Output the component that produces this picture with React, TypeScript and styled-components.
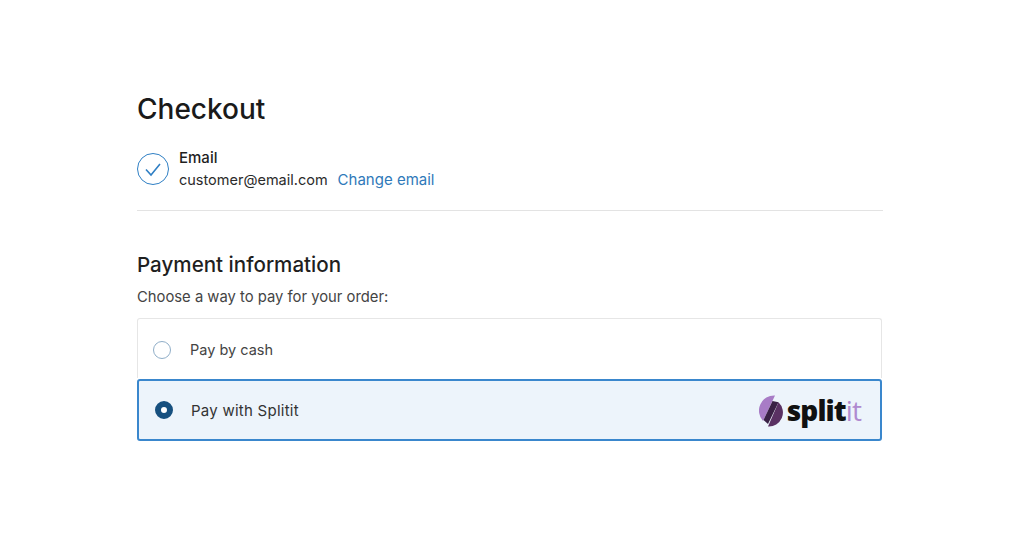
import React from "react";
import styled, { createGlobalStyle } from "styled-components";

const Global = createGlobalStyle`
  html, body { margin: 0; padding: 0; background: #fff; }
  body { font-family: Inter, "Liberation Sans", sans-serif; color: #1f1f1f; }
`;
const Page = styled.main`
  width: 746px;
  height: 538px;
  box-sizing: border-box;
  margin-left: 137px;
  padding-top: 91px;
`;
const Title = styled.h1`
  margin: 0;
  font-size: 28px;
  line-height: 36px;
  font-weight: 500;
  color: #1a1a1a;
`;
const EmailRow = styled.section`
  display: flex;
  align-items: center;
  gap: 10px;
  margin-top: 21px;
  padding-bottom: 20px;
  border-bottom: 1px solid #e3e3e3;
`;
const CheckBadge = styled.span`
  width: 32px;
  height: 32px;
  display: block;
  margin-bottom: 1px;
`;
const EmailText = styled.div`
  display: flex;
  flex-direction: column;
  gap: 2px;
`;
const EmailLabel = styled.div`
  font-size: 15px;
  line-height: 20px;
  font-weight: 500;
`;
const EmailLine = styled.div`
  display: flex;
  gap: 10px;
  font-size: 14.5px;
  line-height: 20px;
  color: #2b2b2b;
`;
const ChangeLink = styled.a`
  color: #2f79b9;
  font-size: 15px;
`;
const Heading = styled.h2`
  margin: 41px 0 0;
  font-size: 20.6px;
  line-height: 26px;
  font-weight: 500;
`;
const Hint = styled.p`
  margin: 9px 0 0;
  font-size: 14.8px;
  line-height: 20px;
  color: #444;
`;
const Methods = styled.div`
  width: 745px;
  margin-top: 11px;
`;
const Option = styled.label<{ $selected?: boolean }>`
  display: flex;
  align-items: center;
  box-sizing: border-box;
  ${(p) =>
    p.$selected
      ? `height: 62px; margin-top: 1px; padding: 0 19px 0 15.500px; gap: 18.500px; background: #edf4fb; border: 2px solid #3a87cd; border-radius: 3px; color: #333; font-size: 15px; letter-spacing: 0.25px;`
      : `height: 60px; padding: 2px 15px 0; gap: 19px; border: 1px solid #e6e6e6; border-bottom: 0; border-radius: 3px 3px 0 0; color: #444; font-size: 14.5px;`}
`;
const Radio = styled.span<{ $selected?: boolean }>`
  width: 18px;
  height: 18px;
  box-sizing: border-box;
  border-radius: 50%;
  flex: none;
  background: #fff;
  border: ${(p) => (p.$selected ? "6px solid #17507f" : "1px solid #90aec8")};
`;
const OptionLabel = styled.span`
  flex: 1;
`;
const Logo = styled.div`
  display: flex;
  align-items: center;
  gap: 2px;
`;
const LogoWord = styled.span`
  font-family: "Open Sans", sans-serif;
  font-size: 28px;
  line-height: 32px;
  font-weight: 800;
  letter-spacing: -0.9px;
  color: #111;
`;
const LogoSuffix = styled.span`
  font-weight: 400;
  color: #b08ad0;
`;

export default function App() {
  return (
    <Page>
      <Global />
      <Title>Checkout</Title>
      <EmailRow>
        <CheckBadge>
          <svg width="32" height="32" viewBox="0 0 32 32" fill="none">
            <circle cx="16" cy="16" r="15.5" stroke="#2f7fc4" />
            <path d="M9 16.5l5 5.5 9-11" stroke="#2f7fc4" strokeWidth="1.6" />
          </svg>
        </CheckBadge>
        <EmailText>
          <EmailLabel>Email</EmailLabel>
          <EmailLine>
            <span>customer@email.com</span>
            <ChangeLink>Change email</ChangeLink>
          </EmailLine>
        </EmailText>
      </EmailRow>
      <Heading>Payment information</Heading>
      <Hint>Choose a way to pay for your order:</Hint>
      <Methods>
        <Option>
          <Radio />
          <OptionLabel>Pay by cash</OptionLabel>
        </Option>
        <Option $selected>
          <Radio $selected />
          <OptionLabel>Pay with Splitit</OptionLabel>
          <Logo>
            <svg width="26" height="33" viewBox="1 0 26 33">
              <path d="M17 1.500A15.200 15.200 0 0 0 5 27Z" fill="#a87cc6" />
              <path d="M20.500 8.300A14 14 0 0 1 10 32.500Z" fill="#5a3163" />
              <path d="M14.500 7L20.500 8.300 10 30 5.500 26Z" fill="#3a2145" />
            </svg>
            <LogoWord>
              split<LogoSuffix>it</LogoSuffix>
            </LogoWord>
          </Logo>
        </Option>
      </Methods>
    </Page>
  );
}
